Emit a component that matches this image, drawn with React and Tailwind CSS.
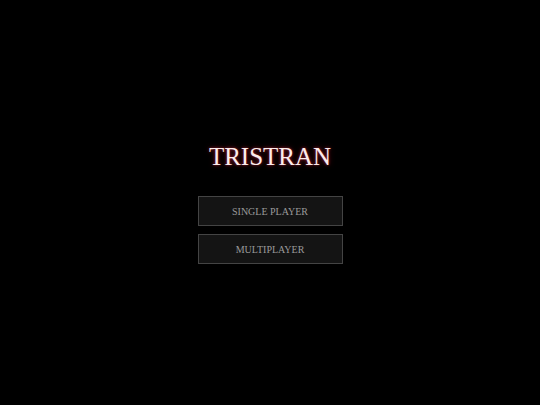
import React from 'react';

export default function App() {
  return (
    <div className="w-full h-screen bg-black flex flex-col items-center justify-center pt-[3px] font-['Liberation_Serif',serif]">
      <h1 className="text-[25px] leading-none text-[#fcecec] mb-[27px] [text-shadow:0_0_3px_rgba(200,40,60,0.8),0_0_6px_rgba(160,20,40,0.5)]">
        TRISTRAN
      </h1>
      <div className="flex flex-col gap-[8px]">
        <button className="w-[145px] h-[30px] bg-[#141414] border border-[#444] text-[#9a9a9a] text-[10px]">
          SINGLE PLAYER
        </button>
        <button className="w-[145px] h-[30px] bg-[#141414] border border-[#444] text-[#9a9a9a] text-[10px]">
          MULTIPLAYER
        </button>
      </div>
    </div>
  );
}
